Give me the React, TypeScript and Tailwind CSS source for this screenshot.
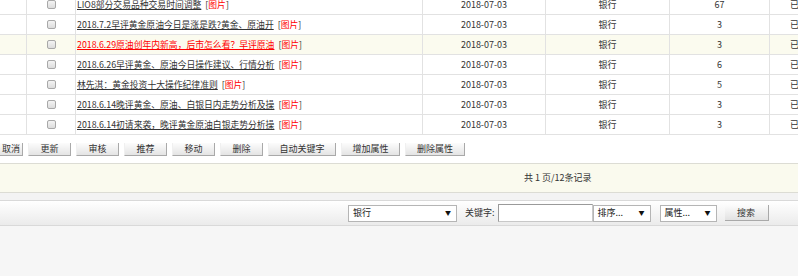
import React from "react";

const rows = [
  { t: "LIO8部分交易品种交易时间调整", n: "67" },
  { t: "2018.7.2早评黄金原油今日是涨是跌?黄金、原油开", n: "3" },
  { t: "2018.6.29原油创年内新高，后市怎么看？早评原油", n: "3", red: true },
  { t: "2018.6.26早评黄金、原油今日操作建议、行情分析", n: "6" },
  { t: "林先淇：黄金投资十大操作纪律准则", n: "5" },
  { t: "2018.6.14晚评黄金、原油、白银日内走势分析及操", n: "3" },
  { t: "2018.6.14初请来袭，晚评黄金原油白银走势分析操", n: "3" },
];

const buttons: [string, string][] = [
  ["取消", "w-[24px]"],
  ["更新", "w-[43px]"],
  ["审核", "w-[43px]"],
  ["推荐", "w-[43px]"],
  ["移动", "w-[43px]"],
  ["删除", "w-[43px]"],
  ["自动关键字", "w-[68px]"],
  ["增加属性", "w-[59px]"],
  ["删除属性", "w-[60px]"],
];

function Checkbox() {
  return (
    <div className="w-[9px] h-[9px] rounded-[2px] border border-[#a8a8a8] bg-gradient-to-b from-[#f4f4f4] to-[#dcdcdc]" />
  );
}

function Select({ label, w }: { label: string; w: string }) {
  return (
    <div
      className={`${w} h-[17px] bg-white border border-[#b5b5b5] flex items-center justify-between pl-[4px] pr-[5px] text-[#222]`}
    >
      <span>{label}</span>
      <span className="text-[6px] text-[#111]">▼</span>
    </div>
  );
}

export default function App() {
  return (
    <div className="w-[798px] h-[276px] overflow-hidden bg-[#f6f6f6] text-[9px] leading-[10px] text-[#333] font-['Noto_Sans_CJK_SC','Noto_Sans',sans-serif]">
      <div className="bg-white">
        <div className="mt-[-5px]">
          {rows.map((r, i) => (
            <div
              key={i}
              className={`flex h-[20px] border-b border-[#e2e2e2] ${i === 2 ? "bg-[#fbfbef]" : "bg-white"}`}
            >
              <div className="w-[27px] shrink-0 border-r border-[#e2e2e2]" />
              <div className="w-[49px] shrink-0 border-r border-[#e2e2e2] flex items-center justify-center">
                <Checkbox />
              </div>
              <div className="w-[347px] shrink-0 border-r border-[#e2e2e2] flex items-center pl-[1px] whitespace-nowrap text-[8.8px]">
                <span className={`underline ${r.red ? "text-[#ff0000]" : "text-[#333]"}`}>{r.t}</span>
                <span className="ml-[4px] text-[#333]">[</span>
                <span className="text-[#ff0000]">图片</span>
                <span className="text-[#333]">]</span>
              </div>
              <div className="w-[123px] shrink-0 border-r border-[#e2e2e2] flex items-center justify-center">
                2018-07-03
              </div>
              <div className="w-[124px] shrink-0 border-r border-[#e2e2e2] flex items-center justify-center">
                银行
              </div>
              <div className="w-[100px] shrink-0 border-r border-[#e2e2e2] flex items-center justify-center">
                {r.n}
              </div>
              <div className="w-[60px] shrink-0 flex items-center pl-[20px] whitespace-nowrap">已审核</div>
            </div>
          ))}
        </div>
        <div className="flex gap-[5px] ml-[-1px] pt-[8px] pb-[7px]">
          {buttons.map(([b, w]) => (
            <div
              key={b}
              className={`${w} h-[13px] shrink-0 flex items-center justify-center bg-gradient-to-b from-[#fcfcfc] to-[#e4e4e4] border-r border-b border-[#a9a9a9] border-l border-l-[#f0f0f0] text-[#333]`}
            >
              {b}
            </div>
          ))}
        </div>
      </div>
      <div className="h-[30px] bg-[#fafaee] border-t border-b border-[#dcdcd4] flex items-center pl-[524px] text-[#333] whitespace-pre">
        共 1 页/12条记录
      </div>
      <div className="h-[7px] bg-[#f3f3f3]" />
      <div className="h-[26px] border-t border-b border-[#d9d9d9] bg-gradient-to-b from-[#ffffff] to-[#ebebeb] flex items-center pl-[348px]">
        <Select label="银行" w="w-[109px]" />
        <span className="ml-[8px] text-[#333]">关键字:</span>
        <div className="ml-[3px] w-[95px] h-[18px] bg-white border border-[#c8c8c8] border-t-[#9a9a9a] border-l-[#9a9a9a]" />
        <Select label="排序..." w="w-[58px]" />
        <div className="w-[9px]" />
        <Select label="属性..." w="w-[57px]" />
        <div className="ml-[8px] w-[44px] h-[16px] flex items-center justify-center bg-gradient-to-b from-[#fcfcfc] to-[#e2e2e2] border-r border-b border-[#a9a9a9] text-[#333]">
          搜索
        </div>
      </div>
    </div>
  );
}
